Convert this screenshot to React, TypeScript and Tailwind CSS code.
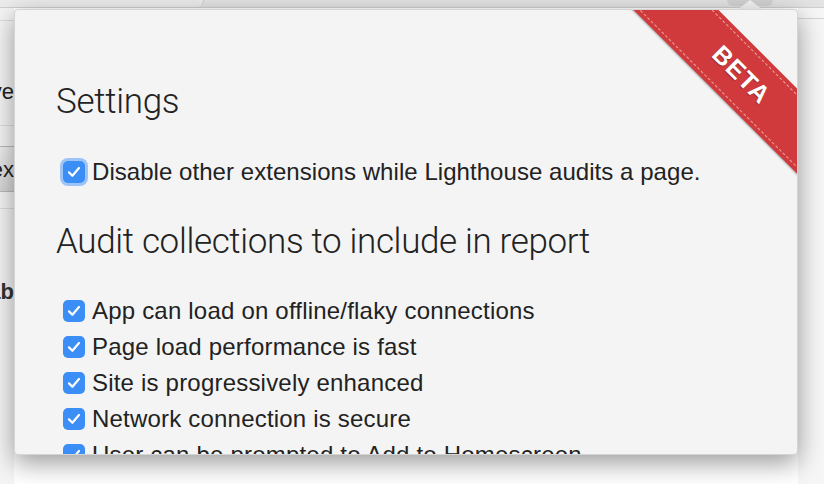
import React from "react";

const audits = [
  "App can load on offline/flaky connections",
  "Page load performance is fast",
  "Site is progressively enhanced",
  "Network connection is secure",
  "User can be prompted to Add to Homescreen",
];

function Check({ focus = false }: { focus?: boolean }) {
  return (
    <span
      className={`flex h-[22px] w-[22px] shrink-0 items-center justify-center rounded-[5px] bg-[#3b8ef6] ${
        focus ? "ring-[3px] ring-[#9cc4f7]" : ""
      }`}
    >
      <svg width="14" height="12" viewBox="0 0 14 12" fill="none">
        <path d="M2 6.4 L5.4 9.8 L12 2" stroke="white" strokeWidth="2.2" strokeLinecap="round" strokeLinejoin="round" />
      </svg>
    </span>
  );
}

export default function App() {
  return (
    <div className="relative h-[484px] w-[824px] overflow-hidden bg-white font-['Liberation_Sans',Arial,sans-serif] text-[#222]">
      {/* page behind the popup */}
      <div className="flex h-[8px] border-b border-[#cfcfcf] bg-[#e3e3e3]">
        <div className="w-[204px] rounded-br-[6px] border-r border-[#cfcfcf] bg-[#ececec]"></div>
      </div>
      <div className="flex h-[476px]">
        <div className="flex w-[14px] flex-col bg-[#f5f5f5]">
          <div className="mt-[12px] h-px bg-[#ddd]"></div>
          <div className="mt-[58px] flex h-[26px] justify-end overflow-hidden text-[22px] leading-[26px]">
            <span className="whitespace-nowrap">Save</span>
          </div>
          <div className="mt-[20px] h-px bg-[#ddd]"></div>
          <div className="mt-[20px] flex h-[46px] items-center justify-end overflow-hidden border-y border-[#bbb] bg-gradient-to-b from-[#eee] to-[#d6d6d6] text-[22px]">
            <span className="whitespace-nowrap">Index</span>
          </div>
          <div className="mt-[16px] h-px bg-[#ddd]"></div>
          <div className="mt-[70px] flex h-[26px] justify-end overflow-hidden text-[22px] font-bold leading-[26px] text-[#333]">
            <span className="whitespace-nowrap">Tab</span>
          </div>
        </div>
        <div className="flex-1"></div>
        <div className="w-[26px] bg-[#f6f6f6]">
          <div className="mt-[10px] h-px bg-[#d5d5d5]"></div>
        </div>
      </div>

      {/* toolbar button + arrow */}
      <div className="absolute left-[727px] top-[-6px] h-[12px] w-[46px] rounded-[6px] bg-[#d2d2d2]"></div>
      <div className="absolute left-[737px] top-[0px] h-0 w-0 border-x-[13px] border-b-[10px] border-x-transparent border-b-[#f4f4f4]"></div>

      {/* popup */}
      <div className="absolute left-[14px] top-[9px] h-[446px] w-[784px] overflow-hidden rounded-[4px] border border-[#d4d4d4] bg-[#f4f4f4] shadow-[0_8px_26px_rgba(0,0,0,0.4)]">
        <div className="pl-[41px] pt-[74px]">
          <h1 className="font-['Roboto',sans-serif] text-[35px] font-light leading-none tracking-[-0.3px] text-[#222]">
            Settings
          </h1>
          <label className="mt-[39px] flex items-center gap-[7px] pl-[7px] text-[24px] leading-[28px] tracking-[0.05px]">
            <Check focus />
            <span>Disable other extensions while Lighthouse audits a page.</span>
          </label>
          <h2 className="mt-[38px] font-['Roboto',sans-serif] text-[35px] font-light leading-none tracking-[-0.35px] text-[#222]">
            Audit collections to include in report
          </h2>
          <ul className="mt-[38px] flex flex-col gap-[8px] pl-[7px]">
            {audits.map((a) => (
              <li key={a} className="flex items-center gap-[7px] text-[24px] leading-[28px] tracking-[0.2px]">
                <Check />
                <span>{a}</span>
              </li>
            ))}
          </ul>
        </div>

        {/* BETA ribbon */}
        <div className="absolute left-[571px] top-[30px] flex h-[60px] w-[300px] rotate-45 items-center justify-center bg-[#d03a3c] pl-[14px] shadow-[0_1px_2px_rgba(0,0,0,0.35)]">
          <div className="absolute inset-x-0 top-[4px] border-t border-dashed border-[#f0a0a0]"></div>
          <div className="absolute inset-x-0 bottom-[4px] border-t border-dashed border-[#f0a0a0]"></div>
          <span className="text-[25px] font-bold tracking-[1px] text-white [text-shadow:0_1px_1px_rgba(0,0,0,0.3)]">
            BETA
          </span>
        </div>
      </div>
    </div>
  );
}
